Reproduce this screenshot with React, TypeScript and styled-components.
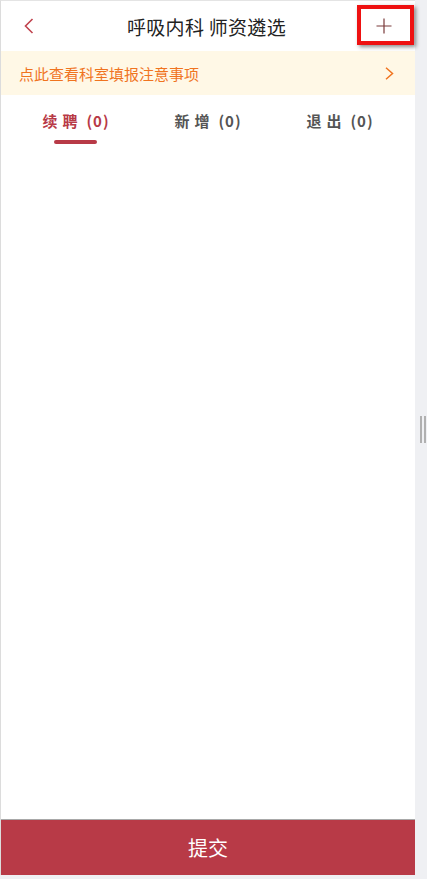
import React, { useState } from "react";
import styled, { createGlobalStyle } from "styled-components";

const Global = createGlobalStyle`
  html, body { margin: 0; padding: 0; background: #eff0f3; }
  body { font-family: "Noto Sans CJK SC", "Noto Sans", sans-serif; }
  * { box-sizing: border-box; }
`;

const Shell = styled.div`
  display: flex;
  width: 427px;
  height: 879px;
  background: #eff0f3;
`;

const Page = styled.div`
  position: relative;
  width: 415px;
  height: 875px;
  background: #fff;
  border-left: 1px solid #dcdcdc;
  border-top: 1px solid #e4e4e4;
  display: flex;
  flex-direction: column;
`;

const Side = styled.div`
  flex: 1;
  display: flex;
  align-items: center;
  justify-content: flex-end;
  padding-right: 1px;
  gap: 2px;
  padding-bottom: 21px;
`;

const Grip = styled.div`
  width: 2px;
  height: 27px;
  background: #b0b0b0;
`;

const Header = styled.div`
  height: 50px;
  display: flex;
  align-items: center;
  justify-content: space-between;
  padding: 0 16px 0 23px;
`;

const Title = styled.div`
  font-size: 19px;
  color: #222;
  letter-spacing: 0.3px;
  padding-left: 8px;
`;

const IconBtn = styled.div<{ $w?: number; $start?: boolean }>`
  width: ${(p) => p.$w ?? 30}px;
  height: 30px;
  display: flex;
  align-items: center;
  justify-content: ${(p) => (p.$start ? "flex-start" : "center")};
`;

const Highlight = styled.div`
  position: absolute;
  left: 356px;
  top: 4px;
  width: 57px;
  height: 40px;
  border: 4px solid #ee1111;
  box-shadow: 2px 2px 4px rgba(0, 0, 0, 0.45);
  pointer-events: none;
`;

const Notice = styled.div`
  height: 44px;
  background: #fff8e6;
  display: flex;
  align-items: center;
  justify-content: space-between;
  padding: 0 21px 0 18px;
  color: #f0741f;
  font-size: 15px;
`;

const Tabs = styled.div`
  display: grid;
  grid-template-columns: repeat(3, 1fr);
  padding: 0 9px;
  height: 55px;
`;

const Tab = styled.div<{ $active?: boolean }>`
  position: relative;
  display: flex;
  justify-content: center;
  align-items: baseline;
  gap: 4px;
  padding-top: 15px;
  font-size: 15px;
  font-weight: 700;
  color: ${(p) => (p.$active ? "#b83a47" : "#555")};
  &::after {
    content: "";
    display: ${(p) => (p.$active ? "block" : "none")};
    position: absolute;
    left: 50%;
    top: 45px;
    width: 43px;
    height: 4px;
    margin-left: -22px;
    border-radius: 2px;
    background: #b83a47;
  }
`;

const TabLabel = styled.span`
  letter-spacing: 5px;
`;

const TabCount = styled.span`
  letter-spacing: 1px;
`;

const Body = styled.div`
  flex: 1;
`;

const Submit = styled.button`
  height: 56px;
  border: none;
  border-top: 1px solid #a8a8a8;
  background: #b83a47;
  color: #fff;
  font-family: "Noto Sans CJK SC", sans-serif;
  font-size: 20px;
  padding: 0;
  width: 100%;
`;

export default function App() {
  const [active, setActive] = useState(0);
  const tabs = [
    { label: "续聘", count: 0 },
    { label: "新增", count: 0 },
    { label: "退出", count: 0 },
  ];
  return (
    <Shell>
      <Global />
      <Page>
        <Header>
          <IconBtn $w={12} $start>
            <svg width="10" height="16" viewBox="0 0 10 16">
              <path d="M8.5 1 L1.5 8 L8.5 15" fill="none" stroke="#c0434e" strokeWidth="1.6" />
            </svg>
          </IconBtn>
          <Title>呼吸内科 师资遴选</Title>
          <IconBtn>
            <svg width="16" height="16" viewBox="0 0 16 16">
              <path d="M8 0.5 V15.5 M0.5 8 H15.5" stroke="#7a3a3a" strokeWidth="1.2" />
            </svg>
          </IconBtn>
        </Header>
        <Highlight />
        <Notice>
          <span>点此查看科室填报注意事项</span>
          <svg width="9" height="13" viewBox="0 0 9 13">
            <path d="M1 0.8 L7.5 6.5 L1 12.2" fill="none" stroke="#f0741f" strokeWidth="1.5" />
          </svg>
        </Notice>
        <Tabs>
          {tabs.map((t, i) => (
            <Tab key={t.label} $active={i === active} onClick={() => setActive(i)}>
              <TabLabel>{t.label}</TabLabel>
              <TabCount>({t.count})</TabCount>
            </Tab>
          ))}
        </Tabs>
        <Body />
        <Submit>提交</Submit>
      </Page>
      <Side>
        <Grip />
        <Grip />
      </Side>
    </Shell>
  );
}
